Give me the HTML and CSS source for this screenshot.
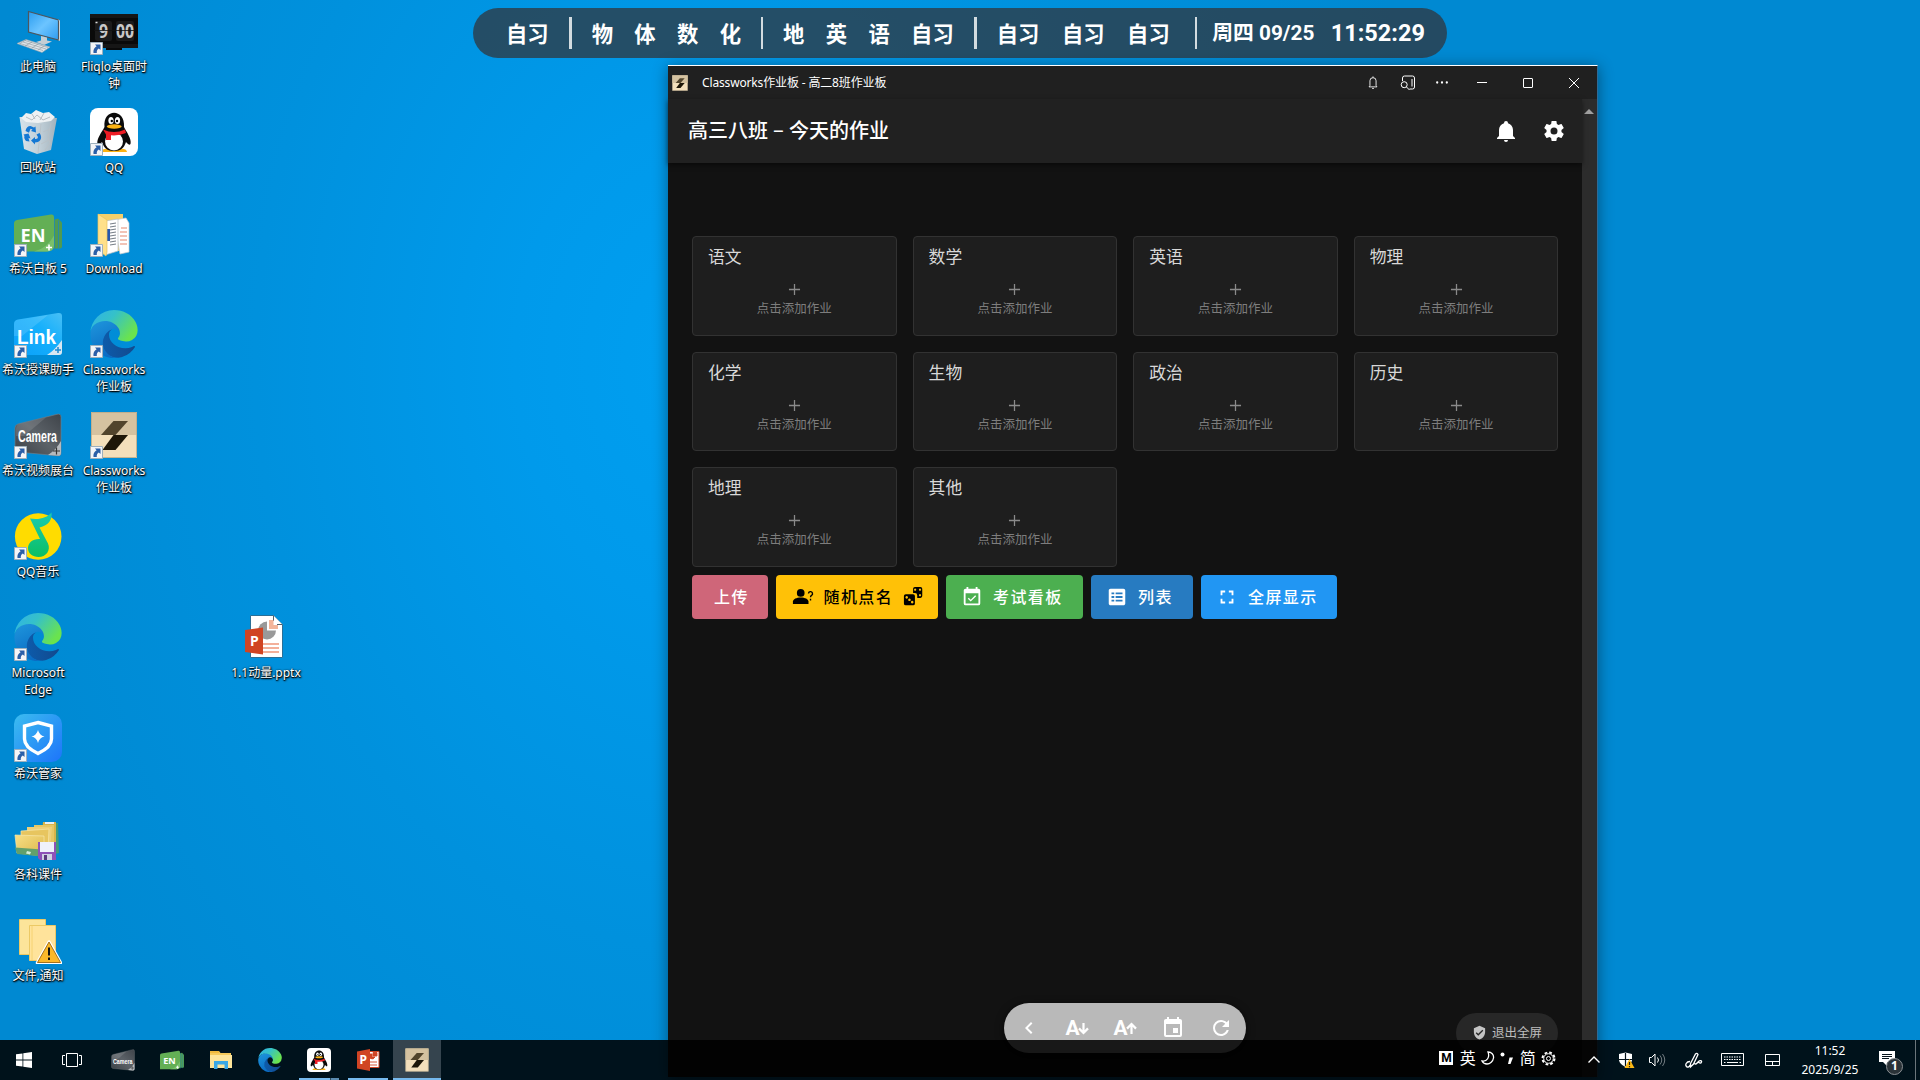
FILE: index.html
```html
<!DOCTYPE html>
<html lang="zh-CN">
<head>
<meta charset="utf-8">
<title>Classworks作业板</title>
<link rel="stylesheet" href="styles.css">
</head>
<body>
<svg class="sprite" aria-hidden="true">
  <defs>
    <linearGradient id="g-edge-top" x1="0" y1="0" x2="1" y2=".55"><stop offset="0" stop-color="#2fb1ea"/><stop offset=".45" stop-color="#35c1c9"/><stop offset="1" stop-color="#6ae34e"/></linearGradient>
    <linearGradient id="g-edge-mid" x1="0" y1="0" x2=".4" y2="1"><stop offset="0" stop-color="#1f97dd"/><stop offset="1" stop-color="#0a6cc4"/></linearGradient>
    <linearGradient id="g-edge-low" x1="0" y1="0" x2="1" y2="0"><stop offset="0" stop-color="#0d5bab"/><stop offset="1" stop-color="#124a8e"/></linearGradient>
    <linearGradient id="g-screen" x1="0" y1="0" x2="1" y2="1"><stop offset="0" stop-color="#2a9df0"/><stop offset=".5" stop-color="#6cc4ff"/><stop offset="1" stop-color="#2e9cf0"/></linearGradient>
    <linearGradient id="g-link" x1="0" y1="1" x2="1" y2="0"><stop offset="0" stop-color="#0aa0fa"/><stop offset=".6" stop-color="#16b0fc"/><stop offset="1" stop-color="#48bff5"/></linearGradient>
    <linearGradient id="g-cam" x1="0" y1="1" x2="1" y2="0"><stop offset="0" stop-color="#3b4046"/><stop offset=".5" stop-color="#5c6268"/><stop offset="1" stop-color="#3f444a"/></linearGradient>
    <linearGradient id="g-note" x1="0" y1="0" x2="0" y2="1"><stop offset="0" stop-color="#19cbb2"/><stop offset="1" stop-color="#0cbf63"/></linearGradient>
    <linearGradient id="g-guard" x1="0" y1="0" x2="1" y2="1"><stop offset="0" stop-color="#3bbdf0"/><stop offset="1" stop-color="#1d74fa"/></linearGradient>
    <linearGradient id="g-bin" x1="0" y1="0" x2="1" y2="0"><stop offset="0" stop-color="#e6e9ec"/><stop offset=".55" stop-color="#cfd4d8"/><stop offset="1" stop-color="#aeb5bb"/></linearGradient>
    <linearGradient id="g-fold" x1="0" y1="0" x2="1" y2="1"><stop offset="0" stop-color="#f7df86"/><stop offset="1" stop-color="#dcb64a"/></linearGradient>
  </defs>
  <symbol id="shortcut" viewBox="0 0 13 13"><path d="M.5.5h12v12H.5z" fill="#f4f5f7" stroke="#9fb0bd"/><path d="M5 2.500h5.500V8L8.800 6.400C7.200 7.400 6.600 8.800 6.800 11H3.500C3 8 4.200 5.800 6.600 4.200z" fill="#2b5fa8"/></symbol>
  <symbol id="pc" viewBox="0 0 48 48"><path d="M14.500 4.500 44.500 13v20L14.500 25z" fill="url(#g-screen)" stroke="#4d565e" stroke-width="1.200"/><path d="M44.500 13l1 .5v20l-1-.5" stroke="#ccd3d8" fill="none"/><path d="M27 29l6 1.500v3l5 1-8 3.500-8-3 5-1.500z" fill="#c5ced4"/><path d="M3 36.500l9-4 24 7.500-8 5.500z" fill="#dfe5e9" stroke="#9aa6ae" stroke-width=".6"/><path d="M6 36.500l23 7M9 35l23 7M11 33.500l23 7M12 33l-7 4M18 35l-7 4M24 37l-6 4M30 39l-6 4" stroke="#8d999f" stroke-width=".6" fill="none"/></symbol>
  <symbol id="flip" viewBox="0 0 48 48"><path d="M0 7h48v34H32v2H16v-2H0z" fill="#0a0a0a"/><path d="M0 7h48v4H0zM0 37h48v4H0z" fill="#161616"/><rect x="5" y="14" width="17" height="20" rx="2" fill="#1b1b1b"/><rect x="26" y="14" width="18" height="20" rx="2" fill="#1b1b1b"/><path d="M5.500 15.500h2" stroke="#ddd" stroke-width="1.500"/></symbol>
  <symbol id="bin" viewBox="0 0 48 48"><path d="M5.500 9 43 10l-6 32-14 4-13-5z" fill="url(#g-bin)" opacity=".93"/><path d="M7 10l5-5 5 1 5-4 7 3 6-1 6 5-4 4-13 2-12-1z" fill="#eef1f3"/><path d="M12 9l6 3 5-5 6 5 7-3M18 6l3 5M30 5l-4 7" stroke="#b6bdc3" fill="none"/><path d="M27 16l-3 29M37 15l-3 14 2 6-5 7M29 24l7-3M27 36l8-4" stroke="#b9c0c5" stroke-width=".8" fill="none"/><path d="M11.500 23q1-5 5-5l3.500 1.500 1.500-1 .5 6-5-1.500 1.500-1.500-2-.8-1.500 4zM9.500 26.500l5-1 2 5-2-.5 1 3.500-3.500-.5q-2.500-3-1.500-5zM17 32.500l4-3.500v2q3 .5 3-2l-1.500-2.500 3-1.500q3 4 .5 7.500-1.500 2-5 2v2z" fill="#1478d4"/></symbol>
  <symbol id="qq" viewBox="0 0 48 48"><rect width="48" height="48" rx="8" fill="#fff"/><path d="M11 44c0-3 5-4 9-3h8c5-1 9 0 9 3H11z" fill="#fcb314"/><path d="M14.500 19C12.500 0 35.500 0 34 19c2 4 8 12 6.500 17-1.500 2-3.500-1-4.500-2-2 6-5 9-12 9s-10-3-12-9c-1 1-3 4-4.500 2-1.300-5 5-13 7-17z" fill="#0b0b0b"/><ellipse cx="24" cy="33.500" rx="9" ry="9" fill="#fff"/><ellipse cx="21" cy="12.500" rx="2.600" ry="3.600" fill="#fff"/><ellipse cx="27.500" cy="12.500" rx="2.600" ry="3.600" fill="#fff"/><circle cx="21.800" cy="13" r="1.200"/><circle cx="27" cy="13" r="1.200"/><ellipse cx="24.200" cy="18.500" rx="7.500" ry="2.200" fill="#fcb314"/><path d="M13 21.500q11 5 22 0l1 3.500q-7 3-15 2.300v4.700h-5v-5.500z" fill="#ee1c25"/></symbol>
  <symbol id="en" viewBox="0 0 48 48"><g transform="translate(0 4.500)"><path d="M38 7l6-2 4 4v24q0 2-2 2h-8z" fill="#4f9a52"/><path d="M40.500 5v32M44.500 7v29" fill="none" stroke="#1f88b8" stroke-width=".8"/><path d="M0 10q0-3 3-3.500L37 1q3-.4 3 3v27q0 7-7 7H0z" fill="#63af55"/><path d="M40 22v9q0 7-7 7H20Q33 35 40 22z" fill="#79c06b"/><path d="M32 34h6M35 31v6" stroke="#fff" stroke-width="1.600"/></g></symbol>
  <symbol id="download" viewBox="0 0 48 48"><g transform="translate(0 3)"><path d="M8 2h25v37H8z" fill="#f5cf6a"/><path d="M24 8l12-2 3 5v29l-9 2z" fill="#fff" stroke="#c6ccd0" stroke-width=".7"/><path d="M31 16h6M30 20h7M30 24h7M30 28h7M30 32h7" stroke="#e3886f" stroke-width="1.200"/><path d="M15 9l13-2v32l-13 4z" fill="#fff" stroke="#b8bec3" stroke-width=".7"/><path d="M20 12l6-1M20 15l6-1M20 18l6-1M20 21l6-1M20 24l6-1M20 27l6-1M20 30l6-1M20 33l6-1" stroke="#777f88" stroke-width="1.200"/><path d="M17 17h3v12h-3z" fill="#2757ad"/><path d="M8 2l9 6v32l-1 4-8-6z" fill="#ffe08a" stroke="#e9c25d" stroke-width=".7"/></g></symbol>
  <symbol id="link" viewBox="0 0 48 48"><path d="M0 14q0-4 4-4.500L44 3q4-.5 4 3v36q0 3-3 3H3q-3 0-3-3z" fill="url(#g-link)"/><path d="M0 14q0-4 4-4.500L34 5 8 26H0z" fill="#fff" opacity=".14"/><path d="M48 30v12q0 3-3 3H33q8-5 15-15z" fill="#d8e7f2"/><path d="M41 40h6M44 37v6" stroke="#1e8bd2" stroke-width="1.500"/></symbol>
  <symbol id="camera" viewBox="0 0 48 48"><path d="M1 17q0-3 3-4L43 3.300q4-1 4 3V42q0 3-3 2.800L4 41q-3-.3-3-3z" fill="url(#g-cam)" stroke="#7a8086" stroke-width=".6"/><path d="M2 18q0-4 3-5l27-6.500L10 25H2z" fill="#fff" opacity=".12"/><path d="M47 30v12q0 3-3 2.800L34 44q8-5 13-14z" fill="#b6babe"/><path d="M39 40h7M42.500 36.500v7" stroke="#333" stroke-width="1.200"/></symbol>
  <symbol id="edge" viewBox="0 0 256 260"><path d="M235.680 195.460a93.730 93.730 0 0 1-10.540 4.710 101.870 101.870 0 0 1-35.900 6.460c-47.320 0-88.540-32.550-88.540-74.320A31.480 31.480 0 0 1 117.130 105c-42.800 1.800-53.800 46.400-53.800 72.530 0 73.880 68.090 81.370 82.760 81.370 7.910 0 19.840-2.300 27-4.560l1.310-.44a128.340 128.340 0 0 0 66.600-52.800 4 4 0 0 0-5.320-5.640Z" fill="url(#g-edge-low)"/><path d="M105.730 246.530a79.200 79.200 0 0 1-22.740-21.340 80.720 80.720 0 0 1 29.530-120c3.120-1.470 8.450-4.130 15.540-4a32.350 32.350 0 0 1 25.690 13 31.880 31.880 0 0 1 6.360 18.660c0-.21 24.460-79.600-80-79.600-43.900 0-80 41.660-80 78.210a130.150 130.150 0 0 0 12.110 56 128 128 0 0 0 156.380 67.110 75.550 75.550 0 0 1-62.780-8Z" fill="url(#g-edge-mid)"/><path d="M152.330 148.860c-.81 1.050-3.300 2.500-3.300 5.660 0 2.610 1.700 5.120 4.720 7.230 14.380 10 41.490 8.680 41.560 8.680a59.560 59.560 0 0 0 30.270-8.350 61.380 61.380 0 0 0 30.430-52.880c.26-22.410-8-37.310-11.340-43.910C223.460 23.840 177.720 0 128 0A128 128 0 0 0 0 126.200c.48-36.540 36.800-66.050 80-66.050 3.500 0 23.460.34 42 10.070 16.340 8.580 24.900 18.940 30.850 29.210 6.180 10.670 7.280 24.150 7.280 29.520s-2.740 13.330-7.800 19.910Z" fill="url(#g-edge-top)"/></symbol>
  <symbol id="cw" viewBox="0 0 48 48"><path d="M1 1h46v46H1z" fill="#f3dfbb"/><path d="M1 1h46v23H1z" fill="#d5c2a0"/><path d="M1.500 1.500h45v45h-45z" fill="none" stroke="#b9a888" stroke-width=".8"/><path d="M23.500 10H38L25.500 24H11z" fill="#51442c"/><path d="M23.500 24H38L25.500 39H12.500z" fill="#1d1608"/></symbol>
  <symbol id="music" viewBox="0 0 48 48"><circle cx="24.200" cy="24.500" r="23.300" fill="#ffdc00"/><path d="M37.500.5c1 7-3 13-12 15l8.500 16c3 7-2 13.500-9.500 13.500-6 0-10.500-3.500-10.500-9s5-9.500 12-9L16 6.500c9 1.500 17-.5 21.500-6z" fill="url(#g-note)"/></symbol>
  <symbol id="guard" viewBox="0 0 48 48"><rect width="48" height="48" rx="10" fill="url(#g-guard)"/><path d="M24 8.500 37.500 12v13c0 6-5 10.500-13.500 14.500C15.500 35.500 10.500 31 10.500 25V12z" fill="none" stroke="#fff" stroke-width="3.400"/><path d="M24 16q1.300 5.300 6.500 6.500Q25.300 23.700 24 29q-1.300-5.300-6.500-6.500Q22.700 21.300 24 16z" fill="#fff"/></symbol>
  <symbol id="folders" viewBox="0 0 48 48"><path d="M28 8h16l1 30-8 2z" fill="#3f9b7a"/><path d="M29 7h13v28H29z" fill="#d9b44a"/><path d="M31 8h9" stroke="#e9f0f4" stroke-width="2"/><path d="M20 10h20v26H20z" fill="#e6c765"/><path d="M13 12h25l-2 24H13z" fill="#edd07a"/><path d="M7 16l28-2-1 22H7z" fill="#e7c55f" stroke="#f6e7ab" stroke-width=".7"/><path d="M1 20l29 1v20L3 38z" fill="url(#g-fold)" stroke="#f6e7ab" stroke-width=".7"/><path d="M1 32.500l27 2v7L3 39z" fill="#62a06c"/><path d="M13 36l4 1-1 2.500-4-1z" fill="#d3ecd9"/><path d="M24 27h18v18H26l-2-2z" fill="#8f52b8"/><path d="M26 27h14v10H26z" fill="#eff1fb"/><path d="M28 39h10v6H28z" fill="#cfd2e2"/><path d="M30 40h3v5h-3z" fill="#5b3a7d"/></symbol>
  <symbol id="notice" viewBox="0 0 48 48"><path d="M5.500 3.500h26v35h-26z" fill="#fce49a" stroke="#ecc965"/><path d="M15.500 9.500h26v35h-26z" fill="#ffe39b" stroke="#ecc965"/><path d="M18 10v34" stroke="#f6d273"/><path d="M35 25.500 47 47H23z" fill="#fbb829" stroke="#fff" stroke-width="2.600" stroke-linejoin="round"/><path d="M35 26 46.500 46.500h-23z" fill="#fbb829" stroke="#a5721b" stroke-width="1" stroke-linejoin="round"/><path d="M35 31.500v8M35 41.500v2.500" stroke="#111" stroke-width="2"/></symbol>
  <symbol id="pptx" viewBox="0 0 48 48"><path d="M8.500 2.500h23l9 9v33h-32z" fill="#fff" stroke="#2b6f96"/><path d="M31.500 2.500v9h9" fill="#fff" stroke="#52616b"/><circle cx="25" cy="17.500" r="9" fill="#999"/><path d="M25 17.500V8h10v9.500z" fill="#fff"/><path d="M27 7h4.500v5H36v4h-9z" fill="#f3b59a"/><path d="M21 31h16M21 35h16M21 39h16" stroke="#f3b09a" stroke-width="1.800"/><path d="M3 17l18-2.500v27L3 39z" fill="#d04423"/></symbol>
  <symbol id="ppt" viewBox="0 0 24 24"><path d="M11 3.500h12v16H11z" fill="#fff" stroke="#d04423"/><path d="M13 6h3v3h3a3 3 0 1 1-6-3zM17 4.500h4V8h-4zM14 14h7M14 17h7" fill="#d04423" stroke="#d04423" stroke-width=".9"/><path d="M1 3.500 14 1v22L1 20.500z" fill="#d04423"/></symbol>
  <symbol id="explorer" viewBox="0 0 24 24"><path d="M1 3h9l1.500 2H22v14H1z" fill="#f5c95b"/><path d="M1 7h22v13H1z" fill="#fde49a"/><path d="M1 3h9v2H1z" fill="#f0b93d"/><path d="M5 21v-8h14v8h-3.500v-4.500h-7V21z" fill="#3aa8e6"/></symbol>
  <symbol id="bell" viewBox="0 0 24 24"><path d="M21,19V20H3V19L5,17V11C5,7.900 7.030,5.170 10,4.290C10,4.190 10,4.100 10,4A2,2 0 0,1 12,2A2,2 0 0,1 14,4C14,4.100 14,4.190 14,4.290C16.970,5.170 19,7.900 19,11V17L21,19M14,21A2,2 0 0,1 12,23A2,2 0 0,1 10,21"/></symbol>
  <symbol id="cog" viewBox="0 0 24 24"><path d="M12,15.500A3.500,3.500 0 0,1 8.500,12A3.500,3.500 0 0,1 12,8.500A3.500,3.500 0 0,1 15.500,12A3.500,3.500 0 0,1 12,15.500M19.430,12.970C19.470,12.650 19.500,12.330 19.500,12C19.500,11.670 19.470,11.340 19.430,11L21.540,9.370C21.730,9.220 21.780,8.950 21.660,8.730L19.660,5.270C19.540,5.050 19.270,4.960 19.050,5.050L16.560,6.050C16.040,5.660 15.500,5.320 14.870,5.070L14.500,2.420C14.460,2.180 14.250,2 14,2H10C9.750,2 9.540,2.180 9.500,2.420L9.130,5.070C8.500,5.320 7.960,5.660 7.440,6.050L4.950,5.050C4.730,4.960 4.460,5.050 4.340,5.270L2.340,8.730C2.210,8.950 2.270,9.220 2.460,9.370L4.570,11C4.530,11.340 4.500,11.670 4.500,12C4.500,12.330 4.530,12.650 4.570,12.970L2.460,14.630C2.270,14.780 2.210,15.050 2.340,15.270L4.340,18.730C4.460,18.950 4.730,19.030 4.950,18.950L7.440,17.940C7.960,18.340 8.500,18.680 9.130,18.930L9.500,21.580C9.540,21.820 9.750,22 10,22H14C14.250,22 14.460,21.820 14.500,21.580L14.870,18.930C15.500,18.670 16.040,18.340 16.560,17.940L19.050,18.950C19.270,19.030 19.540,18.950 19.660,18.730L21.660,15.270C21.780,15.050 21.730,14.780 21.540,14.630L19.430,12.970Z"/></symbol>
  <symbol id="plus" viewBox="0 0 24 24"><path d="M19,12.800H12.800V19H11.200V12.800H5V11.200H11.200V5H12.800V11.200H19V12.800Z"/></symbol>
  <symbol id="refresh" viewBox="0 0 24 24"><path d="M17.650,6.350C16.200,4.900 14.210,4 12,4A8,8 0 0,0 4,12A8,8 0 0,0 12,20C15.730,20 18.840,17.450 19.730,14H17.650C16.830,16.330 14.610,18 12,18A6,6 0 0,1 6,12A6,6 0 0,1 12,6C13.660,6 15.140,6.690 16.220,7.780L13,11H20V4L17.650,6.350Z"/></symbol>
</svg>

<main class="desktop">
  <section class="icons">
    <div class="shortcut"><svg class="pic"><use href="#pc"/></svg><span class="label">此电脑</span></div>
    <div class="shortcut"><svg class="pic"><use href="#bin"/></svg><span class="label">回收站</span></div>
    <div class="shortcut"><svg class="pic" viewBox="0 0 48 48"><use href="#en"/><text x="6.500" y="32.500" font-size="18" textLength="25" lengthAdjust="spacingAndGlyphs" class="glyph">EN</text></svg><svg class="arrow"><use href="#shortcut"/></svg><span class="label">希沃白板 5</span></div>
    <div class="shortcut"><svg class="pic" viewBox="0 0 48 48"><use href="#link"/><text x="3" y="34" font-size="21" textLength="39" lengthAdjust="spacingAndGlyphs" class="glyph cond">Link</text></svg><svg class="arrow"><use href="#shortcut"/></svg><span class="label">希沃授课助手</span></div>
    <div class="shortcut"><svg class="pic" viewBox="0 0 48 48"><use href="#camera"/><text x="4" y="31" font-size="16" textLength="39" lengthAdjust="spacingAndGlyphs" class="glyph cond">Camera</text></svg><svg class="arrow"><use href="#shortcut"/></svg><span class="label">希沃视频展台</span></div>
    <div class="shortcut"><svg class="pic"><use href="#music"/></svg><svg class="arrow"><use href="#shortcut"/></svg><span class="label">QQ音乐</span></div>
    <div class="shortcut"><svg class="pic"><use href="#edge"/></svg><svg class="arrow"><use href="#shortcut"/></svg><span class="label">Microsoft<br>Edge</span></div>
    <div class="shortcut"><svg class="pic"><use href="#guard"/></svg><svg class="arrow"><use href="#shortcut"/></svg><span class="label">希沃管家</span></div>
    <div class="shortcut"><svg class="pic"><use href="#folders"/></svg><span class="label">各科课件</span></div>
    <div class="shortcut"><svg class="pic"><use href="#notice"/></svg><span class="label">文件,通知</span></div>
    <div class="shortcut"><svg class="pic" viewBox="0 0 48 48"><use href="#flip"/><text x="9" y="31" font-size="19" textLength="9" lengthAdjust="spacingAndGlyphs" class="glyph digit">9</text><text x="26" y="31" font-size="19" textLength="18" lengthAdjust="spacingAndGlyphs" class="glyph digit">00</text><path d="M4 23.500h41" stroke="#111" stroke-width=".8"/></svg><svg class="arrow"><use href="#shortcut"/></svg><span class="label">Fliqlo桌面时<br>钟</span></div>
    <div class="shortcut"><svg class="pic"><use href="#qq"/></svg><svg class="arrow"><use href="#shortcut"/></svg><span class="label">QQ</span></div>
    <div class="shortcut"><svg class="pic"><use href="#download"/></svg><svg class="arrow"><use href="#shortcut"/></svg><span class="label">Download</span></div>
    <div class="shortcut"><svg class="pic"><use href="#edge"/></svg><svg class="arrow"><use href="#shortcut"/></svg><span class="label">Classworks<br>作业板</span></div>
    <div class="shortcut"><svg class="pic"><use href="#cw"/></svg><svg class="arrow"><use href="#shortcut"/></svg><span class="label">Classworks<br>作业板</span></div>
    <div class="shortcut loose"><svg class="pic" viewBox="0 0 48 48"><use href="#pptx"/><text x="8" y="33" font-size="14" class="glyph">P</text></svg><span class="label">1.1动量.pptx</span></div>
  </section>

  <div class="schedule">
    <span>自习</span>
    <i class="bar wide"></i>
    <div class="lessons"><span>物</span><span>体</span><span>数</span><span>化</span></div>
    <i class="bar"></i>
    <div class="lessons"><span>地</span><span>英</span><span>语</span><span>自习</span></div>
    <i class="bar wide"></i>
    <div class="lessons evening"><span>自习</span><span>自习</span><span>自习</span></div>
    <i class="bar last"></i>
    <span class="date">周四 09/25</span>
    <span class="time">11:52:29</span>
  </div>

  <section class="window">
    <header class="titlebar">
      <svg class="app-icon"><use href="#cw"/></svg>
      <span class="app-title">Classworks作业板 - 高二8班作业板</span>
      <svg class="t-bell" viewBox="0 0 16 16"><path d="M4.500 11.500V6a3.500 3.500 0 0 1 7 0v5.500l1 1.500h-9zM8 1v1.500M7 14.800h2"/></svg>
      <svg class="t-search" viewBox="0 0 16 16"><path d="M2.500 6V3a2 2 0 0 1 2-2h8a2 2 0 0 1 2 2v9a2 2 0 0 1-2 2H9.500M12 4v7.500"/><circle cx="4.200" cy="9.700" r="3"/><path d="M6.500 12l3 3"/></svg>
      <svg class="t-more" viewBox="0 0 16 16"><circle cx="2.500" cy="8" r="1.300"/><circle cx="8" cy="8" r="1.300"/><circle cx="13.500" cy="8" r="1.300"/></svg>
      <svg class="t-ctl" viewBox="0 0 46 32"><path d="M18 15.500h10"/></svg>
      <svg class="t-ctl" viewBox="0 0 46 32"><rect x="18.500" y="11.500" width="9" height="9" rx=".5"/></svg>
      <svg class="t-ctl" viewBox="0 0 46 32"><path d="M18 11l10 10M28 11 18 21"/></svg>
    </header>
    <div class="viewport">
      <div class="page">
        <header class="toolbar">
          <h1>高三八班<span class="dash">–</span>今天的作业</h1>
          <svg class="icon"><use href="#bell"/></svg>
          <svg class="icon"><use href="#cog"/></svg>
        </header>
        <div class="cards">
          <article class="card"><h2>语文</h2><svg><use href="#plus"/></svg><p>点击添加作业</p></article>
          <article class="card"><h2>数学</h2><svg><use href="#plus"/></svg><p>点击添加作业</p></article>
          <article class="card"><h2>英语</h2><svg><use href="#plus"/></svg><p>点击添加作业</p></article>
          <article class="card"><h2>物理</h2><svg><use href="#plus"/></svg><p>点击添加作业</p></article>
          <article class="card"><h2>化学</h2><svg><use href="#plus"/></svg><p>点击添加作业</p></article>
          <article class="card"><h2>生物</h2><svg><use href="#plus"/></svg><p>点击添加作业</p></article>
          <article class="card"><h2>政治</h2><svg><use href="#plus"/></svg><p>点击添加作业</p></article>
          <article class="card"><h2>历史</h2><svg><use href="#plus"/></svg><p>点击添加作业</p></article>
          <article class="card"><h2>地理</h2><svg><use href="#plus"/></svg><p>点击添加作业</p></article>
          <article class="card"><h2>其他</h2><svg><use href="#plus"/></svg><p>点击添加作业</p></article>
        </div>
        <div class="actions">
          <button class="btn upload"><span>上传</span></button>
          <button class="btn random"><svg viewBox="0 0 24 24"><circle cx="9.500" cy="7.500" r="4.200"/><path d="M1 19.500V17c0-2.800 4-4.500 8.500-4.500S18 14.200 18 17v2.500z"/><path d="M18 8.300a2.200 2.200 0 1 1 3.300 1.900c-.8.500-1.100.9-1.100 2.100M20.200 14v1.800" fill="none" stroke="currentColor" stroke-width="1.500"/></svg><span>随机点名</span><svg viewBox="0 0 24 24"><path fill-rule="evenodd" d="M13 1h6q2 0 2 2v8q0 2-2 2h-3.500v-3q0-2.500-2.500-2.500H11V3q0-2 2-2zM18.500 2.800a1.200 1.200 0 1 0 .1 0zM18.500 8.800a1.200 1.200 0 1 0 .1 0zM13.200 2.800a1.200 1.200 0 1 0 .1 0zM3 9h8q2 0 2 2v8q0 2-2 2H3q-2 0-2-2v-8q0-2 2-2zM4 11a1.400 1.400 0 1 0 .1 0zM7 13.600a1.400 1.400 0 1 0 .1 0zM10 16.200a1.400 1.400 0 1 0 .1 0z"/></svg></button>
          <button class="btn exam"><svg viewBox="0 0 24 24"><path d="M19,19H5V8H19M19,3H18V1H16V3H8V1H6V3H5C3.890,3 3,3.900 3,5V19A2,2 0 0,0 5,21H19A2,2 0 0,0 21,19V5A2,2 0 0,0 19,3M16.530,11.060L15.470,10L10.590,14.880L8.470,12.760L7.410,13.820L10.590,17L16.530,11.060Z"/></svg><span>考试看板</span></button>
          <button class="btn list"><svg viewBox="0 0 24 24"><path d="M19 3H5C3.900 3 3 3.900 3 5V19C3 20.100 3.900 21 5 21H19C20.100 21 21 20.100 21 19V5C21 3.900 20.100 3 19 3M9 17H6V15H9M9 13H6V11H9M9 9H6V7H9M18 17H10.500V15H18M18 13H10.500V11H18M18 9H10.500V7H18Z"/></svg><span>列表</span></button>
          <button class="btn full"><svg viewBox="0 0 24 24"><path d="M5,5H10V7H7V10H5V5M14,5H19V10H17V7H14V5M17,14H19V19H14V17H17V14M10,17V19H5V14H7V17H10Z"/></svg><span>全屏显示</span></button>
        </div>
        <nav class="fab">
          <span><svg viewBox="0 0 24 24"><path d="M15.410,16.580L10.830,12L15.410,7.410L14,6L8,12L14,18L15.410,16.580Z"/></svg></span>
          <span><b>A</b><svg class="small" viewBox="0 0 12 16"><path d="M4.800 2h2.400v8l2.800-3 1.800 1.800L6 14.600.2 8.800 2 7l2.800 3z"/></svg></span>
          <span><b>A</b><svg class="small" viewBox="0 0 12 16"><path d="M4.800 14h2.400V6l2.800 3 1.800-1.800L6 1.400.2 7.200 2 9l2.800-3z"/></svg></span>
          <span><svg viewBox="0 0 24 24"><path d="M19,19H5V8H19M16,1V3H8V1H6V3H5C3.890,3 3,3.890 3,5V19A2,2 0 0,0 5,21H19A2,2 0 0,0 21,19V5C21,3.890 20.100,3 19,3H18V1M17,12H12V17H17V12Z"/></svg></span>
          <span><svg viewBox="0 0 24 24"><use href="#refresh"/></svg></span>
        </nav>
        <div class="exit"><svg viewBox="0 0 24 24"><path d="M10,17L6,13L7.410,11.590L10,14.170L16.590,7.580L18,9M12,1L3,5V11C3,16.550 6.840,21.740 12,23C17.160,21.740 21,16.550 21,11V5L12,1Z"/></svg>退出全屏</div>
      </div>
      <div class="scrollbar"><svg viewBox="0 0 10 5"><path d="M0 5h10L5 0z"/></svg></div>
    </div>
  </section>

  <footer class="taskbar">
    <div class="slot"><svg width="16" height="16" viewBox="0 0 16 16" fill="#fff"><path d="M0 2.300 6.500 1.400v6.200H0zM7.300 1.200 16 0v7.600H7.300zM0 8.400h6.500v6.200L0 13.700zM7.300 8.400H16V16l-8.700-1.200z"/></svg></div>
    <div class="slot view"><svg width="20" height="14" viewBox="0 0 20 14" fill="none" stroke="#fff"><path d="M4.500.5h11v13h-11zM3 2.500H.5v9H3M17 2.500h2.500v9H17"/></svg></div>
    <div class="slot"><svg class="app" viewBox="0 0 48 48"><use href="#camera"/><text x="4" y="31" font-size="16" textLength="39" lengthAdjust="spacingAndGlyphs" class="glyph cond">Camera</text></svg></div>
    <div class="slot"><svg class="app" viewBox="0 0 48 48"><use href="#en"/><text x="6.500" y="32.500" font-size="18" textLength="25" lengthAdjust="spacingAndGlyphs" class="glyph">EN</text></svg></div>
    <div class="slot"><svg class="app"><use href="#explorer"/></svg></div>
    <div class="slot"><svg class="app"><use href="#edge"/></svg></div>
    <div class="slot run multi"><svg class="app"><use href="#qq"/></svg></div>
    <div class="slot run"><svg class="app" viewBox="0 0 24 24"><use href="#ppt"/><text x="3.500" y="16" font-size="12" class="glyph">P</text></svg></div>
    <div class="slot active"><svg class="app"><use href="#cw"/></svg></div>

    <div class="ime">
      <span class="m">M</span><span>英</span>
      <svg width="14" height="14" viewBox="0 0 14 14" fill="none" stroke="#fff" stroke-width="1.300"><path d="M7 1c3.500 0 6 2.500 5.500 6S9 13 6 13c-2 0-4-1-5-3 5 1 8-4 6-9z"/></svg>
      <svg width="14" height="14" viewBox="0 0 14 14" fill="#fff"><circle cx="2.500" cy="3.500" r="2"/><path d="M9.500 6.500H13L10.500 13H8z"/></svg>
      <span>简</span>
      <svg width="15" height="15" viewBox="0 0 15 15" fill="none" stroke="#fff"><circle cx="7.500" cy="7.500" r="6" stroke-width="2" stroke-dasharray="2.700 2.012"/><circle cx="7.500" cy="7.500" r="4.800"/><circle cx="7.500" cy="7.500" r="2"/></svg>
    </div>
    <svg class="chev" width="12" height="8" viewBox="0 0 12 8" fill="none" stroke="#fff" stroke-width="1.400"><path d="M.5 6.500 6 1l5.500 5.500"/></svg>
    <svg class="shield" width="17" height="17" viewBox="0 0 17 17"><path d="M7.500.5 14 2v5.500c0 3.500-3 5.500-6.500 7.500C4 13 1 11 1 7.500V2z" fill="#fff"/><path d="M7.500 1v13M1 7.500h13" stroke="#06131b" stroke-width="1.200"/><path d="M11.500 7 16.500 16h-10z" fill="#fcb714"/><path d="M11.500 10v3M11.500 14v1.200" stroke="#221" stroke-width="1.200"/></svg>
    <svg class="sound" width="17" height="14" viewBox="0 0 17 14" fill="none" stroke="#fff"><path d="M.5 4.500h2L6 1v12L2.500 9.500h-2zM8.500 4.500q2 2.500 0 5"/><path d="M11 2.500q3.500 4.500 0 9M13.500 1q4.500 6 0 12" opacity=".45"/></svg>
    <svg class="pen" width="18" height="17" viewBox="0 0 18 17" fill="none" stroke="#fff" stroke-width="1.300"><path d="M5.500 11.500 10.500 2q1.500-1.500 2.500.5L8.500 12l-3 3zM5 9.500C1 9.500 0 13 1.500 14.500s3 0 3.500-1.500M9.500 11.500c1.500 1.500 2.500-.5 4-2s3.500-1 3 .5-2 1.500-3.500-.5"/></svg>
    <svg class="keys" width="23" height="14" viewBox="0 0 23 14" fill="none" stroke="#fff"><path d="M.5.500h22v12H.5z"/><path d="M3 4h17M3 6.500h17" stroke-dasharray="1.500 1"/><path d="M6 9.500h11M3 9.500h1.500M18.500 9.500H20"/></svg>
    <svg class="pad" width="15" height="12" viewBox="0 0 15 12" fill="none" stroke="#fff"><path d="M.5.500h14v11H.5zM.5 7.500h14M7.500 7.500v4"/></svg>
    <div class="clock"><span>11:52</span><span>2025/9/25</span></div>
    <div class="notify"><svg width="16" height="15" viewBox="0 0 16 15"><path d="M0 0h16v11H8v4l-4-4H0z" fill="#fff"/><path d="M3 3.500h10M3 5.500h10M3 7.500h7" stroke="#06131b"/></svg><span class="badge">1</span></div>
    <i class="peek"></i>
  </footer>
</main>
</body>
</html>
```
FILE: styles.css
```css
* { box-sizing: border-box; }
body {
  margin: 0;
  width: 1920px;
  height: 1080px;
  overflow: hidden;
  font-family: "Noto Sans", "Noto Sans CJK SC", sans-serif;
  color: #fff;
}
h1, h2, p { margin: 0; font-weight: 400; }
.sprite { position: absolute; width: 0; height: 0; overflow: hidden; }
.glyph { font-family: "Noto Sans", sans-serif; font-weight: 700; fill: #fff; }
.cond { font-family: "Liberation Sans", sans-serif; }
.digit { fill: #c9c9c9; }

.desktop {
  position: relative;
  width: 1920px;
  height: 1080px;
  overflow: hidden;
  background: radial-gradient(ellipse 740px 980px at 700px 360px, #009ff0 0%, #009aeb 25%, #0091dd 60%, #0089d2 100%);
}

.icons {
  display: grid;
  grid-auto-flow: column;
  grid-template-rows: repeat(10, 101px);
  grid-auto-columns: 76px;
  padding-top: 7px;
}
.shortcut {
  position: relative;
  display: flex;
  flex-direction: column;
  align-items: center;
}
.loose { grid-column: 4; grid-row: 7; }
.pic { width: 48px; height: 48px; }
.arrow { position: absolute; left: 14px; top: 35px; width: 13px; height: 13px; }
.label {
  margin-top: 3px;
  font-size: 12px;
  line-height: 17px;
  white-space: nowrap;
  text-align: center;
  text-shadow: 0 1px 1px #000, 1px 1px 2px #000, 0 0 2px rgba(0, 0, 0, .7);
}

.schedule {
  position: absolute;
  left: 473px;
  top: 8px;
  width: 974px;
  height: 50px;
  padding-left: 33px;
  display: flex;
  align-items: center;
  border-radius: 25px;
  background: rgba(48, 54, 60, .75);
  font: 700 21.330px/50px "Noto Sans CJK SC", sans-serif;
  white-space: nowrap;
}
.lessons { display: flex; gap: 21.330px; }
.evening { gap: 22.500px; }
.bar { width: 2px; height: 32px; margin: 0 20px; background: #d3dce0; }
.wide { width: 3px; }
.last { margin: 0 15px 0 25.500px; }
.date, .time { font-family: Roboto, "Noto Sans CJK SC", sans-serif; }
.date { width: 118.500px; font-size: 20.800px; }
.time { font-size: 23.500px; }

.window {
  position: absolute;
  left: 668px;
  top: 65px;
  width: 930px;
  height: 1012px;
  display: flex;
  flex-direction: column;
  border-top: 1px solid #fff;
  border-right: 1px solid #2c6a98;
  background: #121212;
  box-shadow: 0 2px 14px rgba(0, 0, 0, .42);
}
.titlebar {
  height: 33px;
  flex: none;
  padding-left: 4px;
  display: flex;
  align-items: center;
  background: #202020;
}
.titlebar svg { fill: none; stroke: #fff; flex: none; }
.titlebar .app-icon { width: 16px; height: 16px; stroke: none; }
.app-title { margin-left: 14px; padding-bottom: 1px; flex: 1; font-size: 12px; letter-spacing: -.15px; white-space: nowrap; }
.t-bell { width: 14px; height: 15px; margin-right: 20px; }
.t-search { width: 16px; height: 16px; margin-right: 19px; }
.titlebar .t-more { width: 14px; height: 15px; margin-right: 10px; fill: #fff; stroke: none; }
.t-ctl { width: 46px; height: 32px; }

.viewport { flex: 1; display: flex; }
.page { position: relative; width: 914px; }
.toolbar {
  height: 64px;
  padding: 0 16px 0 20px;
  display: flex;
  align-items: center;
  gap: 24px;
  background: #212121;
  box-shadow: 0 2px 5px rgba(0, 0, 0, .5);
}
.toolbar h1 {
  flex: 1;
  padding-bottom: 2px;
  font: 500 20px/28px "Noto Sans CJK SC", sans-serif;
}
.dash { display: inline-block; width: 21px; text-align: center; transform: translateY(-1px); }
.icon { width: 24px; height: 24px; fill: #fff; }
.scrollbar { flex: 1; padding: 10px 0 0 2px; background: #2c2c2c; }
.scrollbar svg { display: block; width: 10px; height: 5px; fill: #a0a0a0; }

.cards {
  margin: 73px 24px 0;
  display: grid;
  grid-template-columns: repeat(4, 204.600px);
  grid-auto-rows: 99.500px;
  gap: 16px;
}
.card {
  display: flex;
  flex-direction: column;
  align-items: center;
  padding: 7px 15px;
  border: 1px solid #323232;
  border-radius: 4px;
  background: #1e1e1e;
  font-family: "Noto Sans CJK SC", sans-serif;
}
.card h2 { align-self: stretch; font-size: 16.800px; line-height: 25.500px; color: #d8d8d8; }
.card svg { width: 19px; height: 19px; margin-top: 10.500px; fill: #8a8a8a; flex: none; }
.card p { margin-top: -1px; font-size: 12.500px; line-height: 20.500px; color: #7d7d7d; }

.actions { display: flex; gap: 8px; margin: 8px 24px 0; }
.btn {
  height: 44px;
  padding: 0 0 0 15px;
  display: flex;
  align-items: center;
  gap: 10px;
  border: 0;
  border-radius: 4px;
  color: #fff;
  font: 500 16px/24px "Noto Sans CJK SC", sans-serif;
  letter-spacing: 1.400px;
  white-space: nowrap;
}
.btn span { padding-bottom: 2px; }
.btn svg { width: 22px; height: 22px; fill: currentColor; flex: none; }
.upload { width: 76px; padding-left: 22px; background: #cf6679; }
.random { width: 162px; padding-left: 15.500px; background: #ffc107; color: #000; }
.exam { width: 137px; background: #4caf50; }
.list { width: 102px; background: #277bc1; }
.full { width: 136px; background: #2196f3; }

.fab {
  position: absolute;
  left: 336px;
  top: 904px;
  width: 242px;
  height: 50px;
  padding: 0 1px;
  display: flex;
  border-radius: 25px;
  background: #b9b9b9;
  box-shadow: 0 2px 8px rgba(0, 0, 0, .6);
}
.fab span { width: 48px; display: flex; align-items: center; justify-content: center; }
.fab svg { width: 24px; height: 24px; fill: #fff; }
.fab b { font: 700 21px/24px Roboto, sans-serif; }
.fab .small { width: 11px; height: 15px; margin-left: -2px; }

.exit {
  position: absolute;
  left: 788px;
  top: 914px;
  width: 102px;
  height: 40px;
  padding: 0 0 2px 16px;
  display: flex;
  align-items: center;
  gap: 5px;
  border-radius: 20px;
  background: #272727;
  color: #bdbdbd;
  font: 400 12.500px/20px "Noto Sans CJK SC", sans-serif;
}
.exit svg { width: 15px; height: 15px; fill: #c4c4c4; }

.taskbar {
  position: absolute;
  left: 0;
  right: 0;
  bottom: 0;
  height: 40px;
  display: flex;
  align-items: center;
  background: rgba(0, 0, 0, .87);
}
.slot {
  width: 48px;
  height: 40px;
  margin-right: 1px;
  display: flex;
  align-items: center;
  justify-content: center;
}
.slot:first-child { margin-right: 0; }
.view { margin-right: 3px; }
.app { width: 24px; height: 24px; }
.run { background: linear-gradient(#76b9ed, #76b9ed) 4px 100% / 40px 2px no-repeat; }
.multi { background: linear-gradient(90deg, #76b9ed 31px, #2f4a5e 31px, #2f4a5e 32px, #5b8bb0 32px) 4px 100% / 40px 2px no-repeat; }
.active { background: linear-gradient(#76b9ed, #76b9ed) 0 100% / 100% 2px no-repeat #35444e; }

.ime {
  margin-left: auto;
  margin-bottom: 4px;
  display: flex;
  align-items: center;
  gap: 5.300px;
  font: 400 16px/18px "Noto Sans CJK SC", sans-serif;
}
.ime span { padding-bottom: 2px; }
.ime .m {
  width: 14px;
  height: 14px;
  margin-right: 1px;
  padding: 0;
  background: #fff;
  color: #000;
  font: 700 12px/14px Roboto, sans-serif;
  text-align: center;
}
.chev { margin-left: 32px; }
.shield { margin-left: 18px; }
.sound { margin-left: 14px; }
.pen { margin-left: 19px; }
.keys { margin-left: 18px; }
.pad { margin-left: 21px; }
.clock {
  width: 60px;
  margin-left: 20px;
  display: flex;
  flex-direction: column;
  align-items: center;
  font-size: 12px;
  line-height: 19px;
}
.notify { position: relative; margin-left: 19px; width: 24px; height: 18px; display: flex; }
.badge {
  position: absolute;
  left: 7px;
  top: 7px;
  width: 17px;
  height: 17px;
  border: 1px solid #8a8f93;
  border-radius: 50%;
  background: #2b3338;
  font-size: 12px;
  font-weight: 700;
  line-height: 14px;
  text-align: center;
}
.peek { margin-left: 12px; margin-right: 4px; width: 1px; height: 40px; background: #6b757b; }
```
